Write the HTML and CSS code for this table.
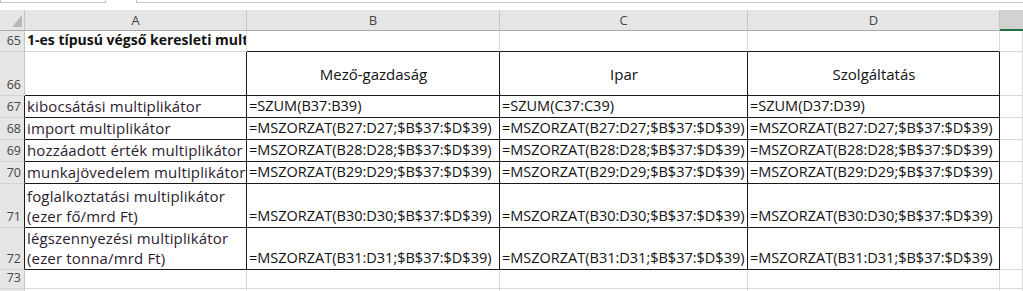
FILE: index.html
```html
<!DOCTYPE html>
<html lang="hu">
<head>
<meta charset="utf-8">
<title>Multiplikátorok</title>
<link rel="stylesheet" href="styles.css">
</head>
<body>
<div class="sheet">
  <div class="topbar">
    <div class="namebox"></div>
    <div class="fbar"></div>
  </div>
  <div class="grid">
    <div class="corner"><svg class="tri" width="10" height="12" viewBox="0 0 10 12"><polygon points="10,0 10,12 0,12" fill="#b8b8b8"/></svg></div>
    <div class="ch">A</div>
    <div class="ch">B</div>
    <div class="ch">C</div>
    <div class="ch">D</div>
    <div class="ch sel"></div>

    <div class="rh">65</div>
    <div class="c title">1-es típusú végső keresleti mult</div>
    <div class="c btm"></div>
    <div class="c btm"></div>
    <div class="c btm"></div>
    <div class="c"></div>

    <div class="rh">66</div>
    <div class="c bx"></div>
    <div class="c bx hd">Mező-gazdaság</div>
    <div class="c bx hd">Ipar</div>
    <div class="c bx hd">Szolgáltatás</div>
    <div class="c"></div>

    <div class="rh blk">67</div>
    <div class="c bx lab">kibocsátási multiplikátor</div>
    <div class="c bx f">=SZUM(B37:B39)</div>
    <div class="c bx f">=SZUM(C37:C39)</div>
    <div class="c bx f">=SZUM(D37:D39)</div>
    <div class="c"></div>

    <div class="rh blk">68</div>
    <div class="c bx lab">import multiplikátor</div>
    <div class="c bx f">=MSZORZAT(B27:D27;$B$37:$D$39)</div>
    <div class="c bx f">=MSZORZAT(B27:D27;$B$37:$D$39)</div>
    <div class="c bx f">=MSZORZAT(B27:D27;$B$37:$D$39)</div>
    <div class="c"></div>

    <div class="rh blk">69</div>
    <div class="c bx lab">hozzáadott érték multiplikátor</div>
    <div class="c bx f">=MSZORZAT(B28:D28;$B$37:$D$39)</div>
    <div class="c bx f">=MSZORZAT(B28:D28;$B$37:$D$39)</div>
    <div class="c bx f">=MSZORZAT(B28:D28;$B$37:$D$39)</div>
    <div class="c"></div>

    <div class="rh blk">70</div>
    <div class="c bx lab">munkajövedelem multiplikátor</div>
    <div class="c bx f">=MSZORZAT(B29:D29;$B$37:$D$39)</div>
    <div class="c bx f">=MSZORZAT(B29:D29;$B$37:$D$39)</div>
    <div class="c bx f">=MSZORZAT(B29:D29;$B$37:$D$39)</div>
    <div class="c"></div>

    <div class="rh blk">71</div>
    <div class="c bx lab wrap">foglalkoztatási multiplikátor<br>(ezer fő/mrd Ft)</div>
    <div class="c bx f">=MSZORZAT(B30:D30;$B$37:$D$39)</div>
    <div class="c bx f">=MSZORZAT(B30:D30;$B$37:$D$39)</div>
    <div class="c bx f">=MSZORZAT(B30:D30;$B$37:$D$39)</div>
    <div class="c"></div>

    <div class="rh blk">72</div>
    <div class="c bx lab wrap">légszennyezési multiplikátor<br>(ezer tonna/mrd Ft)</div>
    <div class="c bx f">=MSZORZAT(B31:D31;$B$37:$D$39)</div>
    <div class="c bx f">=MSZORZAT(B31:D31;$B$37:$D$39)</div>
    <div class="c bx f">=MSZORZAT(B31:D31;$B$37:$D$39)</div>
    <div class="c"></div>

    <div class="rh">73</div>
    <div class="c"></div>
    <div class="c"></div>
    <div class="c"></div>
    <div class="c"></div>
    <div class="c"></div>

    <div class="rh"></div>
    <div class="c"></div>
    <div class="c"></div>
    <div class="c"></div>
    <div class="c"></div>
    <div class="c"></div>
  </div>
</div>
</body>
</html>
```
FILE: styles.css
```css
html, body {
  margin: 0;
  padding: 0;
  background: #ffffff;
  overflow: hidden;
}

.sheet {
  width: 1023px;
  height: 291px;
  overflow: hidden;
  font-family: "Open Sans", "DejaVu Sans", sans-serif;
}

.topbar {
  height: 10px;
  display: flex;
  align-items: flex-start;
  background: #ffffff;
}

.namebox {
  width: 104px;
  height: 2px;
  border: 1px solid #c6c6c6;
  border-top: none;
}

.fbar {
  margin-left: 30px;
  flex: 1;
  height: 2px;
  border: 1px solid #c6c6c6;
  border-top: none;
  border-right: none;
}

.grid {
  display: grid;
  grid-template-columns: 25px 222px 253px 248px 252px 23px;
  grid-template-rows: 21px 21px 44px 22px 22px 22px 22px 44px 42px 19px 10px;
}

.corner {
  background: #e6e6e6;
  border-right: 1px solid #c6c6c6;
  border-bottom: 1px solid #ababab;
  display: flex;
  justify-content: flex-end;
  align-items: flex-end;
  padding: 0 2px 3px 0;
}

.ch {
  background: #e6e6e6;
  border-right: 1px solid #c6c6c6;
  border-bottom: 1px solid #ababab;
  color: #444444;
  font-size: 13px;
  display: flex;
  align-items: center;
  justify-content: center;
}

.ch.sel {
  background: #d2d2d2;
  border-bottom: 2px solid #217346;
  border-right: none;
}

.rh {
  background: #e6e6e6;
  border-right: 1px solid #c6c6c6;
  border-bottom: 1px solid #d4d4d4;
  color: #444444;
  font-size: 12.5px;
  line-height: 16px;
  display: flex;
  justify-content: flex-end;
  align-items: flex-end;
  padding: 0 3px 2px 0;
}

.rh.blk {
  border-right-color: #1a1a1a;
}

.c {
  border-right: 1px solid #d9d9d9;
  border-bottom: 1px solid #d9d9d9;
  font-size: 15px;
  line-height: 20px;
  color: #111111;
  display: flex;
  align-items: flex-end;
  padding: 0 1px 1px 2px;
  white-space: nowrap;
  overflow: hidden;
}

.c.btm {
  border-bottom-color: #1a1a1a;
}

.c.bx {
  border-right-color: #1a1a1a;
  border-bottom-color: #1a1a1a;
}

.c.f {
  font-size: 14.5px;
}

.c.hd {
  justify-content: center;
  align-items: center;
  padding-bottom: 0;
}

.c.lab {
  color: #2d1c31;
  letter-spacing: 0.15px;
}

.c.wrap {
  line-height: 20px;
}

.c.title {
  font-weight: bold;
  font-size: 14px;
  color: #111111;
}
```
